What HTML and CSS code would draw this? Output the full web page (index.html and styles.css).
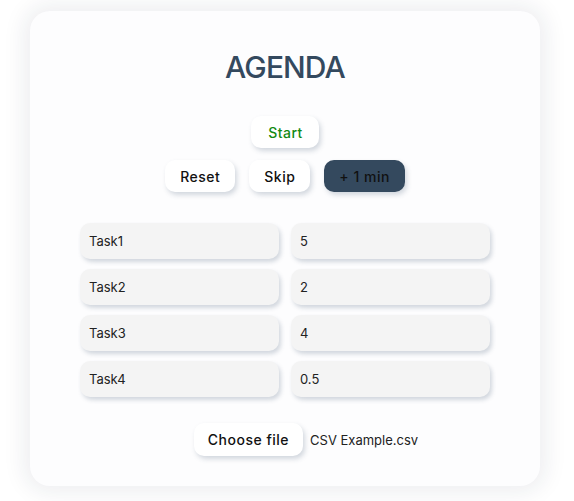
FILE: index.html
```html
<!DOCTYPE html>
<html>
<head>
<meta charset="utf-8">
<link rel="stylesheet" href="styles.css">
</head>
<body>
<div class="card">
  <h1 class="title">AGENDA</h1>
  <div class="controls">
    <div class="row"><button class="btn start">Start</button></div>
    <div class="row">
      <button class="btn">Reset</button>
      <button class="btn">Skip</button>
      <button class="btn dark">+ 1 min</button>
    </div>
  </div>
  <div class="tasks">
    <div class="field">Task1</div><div class="field">5</div>
    <div class="field">Task2</div><div class="field">2</div>
    <div class="field">Task3</div><div class="field">4</div>
    <div class="field">Task4</div><div class="field">0.5</div>
  </div>
  <div class="file">
    <button class="btn choose">Choose file</button>
    <span class="fname">CSV Example.csv</span>
  </div>
</div>
</body>
</html>
```
FILE: styles.css
```css
html, body { margin: 0; padding: 0; }
body {
  background: #ffffff;
  font-family: Inter, "Noto Sans", sans-serif;
  width: 574px;
  height: 501px;
  overflow: hidden;
}
.card {
  box-sizing: border-box;
  margin: 11px 0 0 30px;
  width: 510px;
  height: 475px;
  background: #fdfdfe;
  border-radius: 20px;
  box-shadow: 0 0 22px 6px rgba(20, 40, 70, 0.08);
  display: flex;
  flex-direction: column;
  align-items: center;
  padding-top: 38px;
}
.title {
  margin: 0;
  font-family: Inter, sans-serif;
  font-weight: 500;
  font-size: 30px;
  letter-spacing: -0.9px;
  color: #34495e;
  line-height: 36px;
}
.controls {
  margin-top: 31px;
  display: flex;
  flex-direction: column;
  align-items: center;
  gap: 12px;
}
.row { display: flex; gap: 14px; }
.btn {
  font-family: Inter, sans-serif;
  font-size: 14px;
  font-weight: 500;
  letter-spacing: 0.5px;
  color: #111;
  background: #ffffff;
  border: none;
  border-radius: 10px;
  height: 32px;
  padding: 0 15px;
  box-shadow: 2px 3px 5px rgba(60, 80, 110, 0.22);
}
.start { color: #138a13; padding: 0 16px 0 17px; }
.dark { background: #34495e; color: #111; padding: 0 15px; }
.tasks {
  margin-top: 31px;
  display: grid;
  grid-template-columns: 199px 199px;
  column-gap: 12px;
  row-gap: 10px;
}
.field {
  box-sizing: border-box;
  height: 36px;
  background: #f4f4f4;
  border-radius: 10px;
  padding-left: 9px;
  font-size: 13px;
  color: #222;
  display: flex;
  align-items: center;
  box-shadow: 2px 3px 4px rgba(60, 80, 110, 0.22);
}
.file {
  margin-top: 26px;
  display: flex;
  align-items: center;
  gap: 7px;
  margin-left: 42px;
}
.choose { height: 33px; padding: 0 14px; }
.fname { font-size: 13px; color: #222; }
```
